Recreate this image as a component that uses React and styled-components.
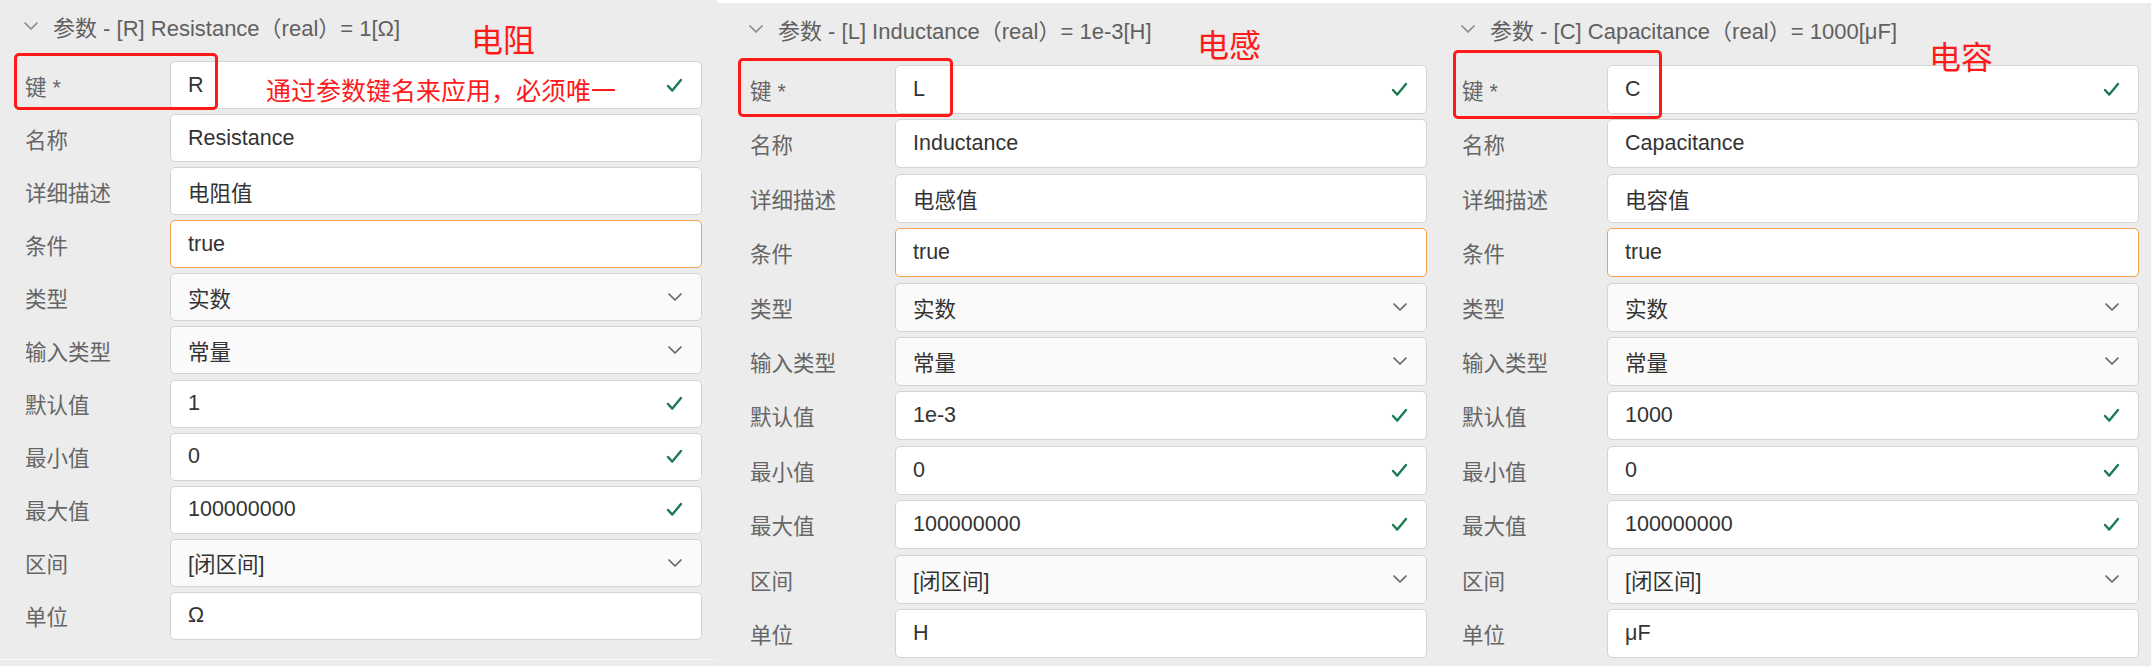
import React from "react";
import styled, { createGlobalStyle } from "styled-components";

const GlobalStyle = createGlobalStyle`
  html, body {
    margin: 0;
    padding: 0;
    background: #ececec;
  }
  body {
    font-family: "Liberation Sans", "Noto Sans CJK SC", sans-serif;
  }
`;

const panels = [
  {
    title: "参数 - [R] Resistance（real）= 1[Ω]",
    key: "R",
    name: "Resistance",
    desc: "电阻值",
    def: "1",
    unit: "Ω",
    note: "电阻",
    hint: "通过参数键名来应用，必须唯一",
    left: 25,
    strip: false,
    rowH: 48,
    gap: 5.1,
    offset: 11,
    box: { left: 14, top: 53, width: 204, height: 57 },
    notePos: { left: 471, top: 22 },
  },
  {
    title: "参数 - [L] Inductance（real）= 1e-3[H]",
    key: "L",
    name: "Inductance",
    desc: "电感值",
    def: "1e-3",
    unit: "H",
    note: "电感",
    left: 33,
    strip: true,
    rowH: 49,
    gap: 5.4,
    offset: 12,
    box: { left: 21, top: 55, width: 215, height: 59 },
    notePos: { left: 480, top: 24 },
  },
  {
    title: "参数 - [C] Capacitance（real）= 1000[μF]",
    key: "C",
    name: "Capacitance",
    desc: "电容值",
    def: "1000",
    unit: "μF",
    note: "电容",
    left: 22,
    strip: true,
    rowH: 49,
    gap: 5.4,
    offset: 12,
    box: { left: 13, top: 47, width: 209, height: 69 },
    notePos: { left: 489, top: 36 },
  },
];

const fieldsFor = (p) => [
  { label: "键 *", value: p.key, icon: "check" },
  { label: "名称", value: p.name },
  { label: "详细描述", value: p.desc },
  { label: "条件", value: "true", focus: true },
  { label: "类型", value: "实数", icon: "select" },
  { label: "输入类型", value: "常量", icon: "select" },
  { label: "默认值", value: p.def, icon: "check" },
  { label: "最小值", value: "0", icon: "check" },
  { label: "最大值", value: "100000000", icon: "check" },
  { label: "区间", value: "[闭区间]", icon: "select" },
  { label: "单位", value: p.unit },
];

const CheckIcon = () => (
  <svg width="17" height="15" viewBox="0 0 17 15">
    <path d="M2 8 L6.3 12.6 L15 2" fill="none" stroke="#1d7a52" strokeWidth="2.4" strokeLinecap="round" strokeLinejoin="round" />
  </svg>
);

const ChevronIcon = ({ color = "#666" }) => (
  <svg width="16" height="10" viewBox="0 0 16 10">
    <path d="M2 2 L8 8 L14 2" fill="none" stroke={color} strokeWidth="1.7" strokeLinecap="round" strokeLinejoin="round" />
  </svg>
);

const Field = ({ field }) => (
  <Input $focus={field.focus} $select={field.icon === "select"}>
    <Value>{field.value}</Value>
    {field.icon === "check" && <IconSlot><CheckIcon /></IconSlot>}
    {field.icon === "select" && <IconSlot><ChevronIcon /></IconSlot>}
  </Input>
);

const Panel = ({ p }) => (
  <Column $left={p.left} $strip={p.strip} $line={!p.strip}>
    <Header>
      <ChevronIcon color="#8a8a8a" />
      <Title>{p.title}</Title>
    </Header>
    <Form $gap={p.gap} $offset={p.offset}>
      {fieldsFor(p).map((f) => (
        <Row key={f.label} $h={p.rowH}>
          <Label>{f.label}</Label>
          <Field field={f} />
        </Row>
      ))}
    </Form>
    <RedBox style={p.box} />
    <Note style={p.notePos}>{p.note}</Note>
    {p.hint && <Hint>{p.hint}</Hint>}
  </Column>
);

export default function App() {
  return (
    <>
      <GlobalStyle />
      <Page>
        {panels.map((p) => (
          <Panel key={p.key} p={p} />
        ))}
      </Page>
    </>
  );
}

const Page = styled.div`
  display: grid;
  grid-template-columns: 717px 723px 711px;
  width: 2151px;
  height: 666px;
  overflow: hidden;
  background: #ececec;
`;

const Column = styled.section`
  position: relative;
  box-sizing: border-box;
  height: 666px;
  padding-left: ${(p) => p.$left}px;
  border-top: ${(p) => (p.$strip ? "3px solid #ffffff" : "0")};
  &::after {
    content: "";
    display: ${(p) => (p.$line ? "block" : "none")};
    position: absolute;
    left: 0;
    right: 0;
    top: 659px;
    height: 1px;
    background: #f7f7f7;
  }
`;

const Header = styled.div`
  display: flex;
  align-items: center;
  gap: 14px;
  height: 51px;
  margin-left: -2px;
`;

const Title = styled.span`
  font-size: 22px;
  color: #606060;
  white-space: nowrap;
`;

const Form = styled.div`
  display: flex;
  flex-direction: column;
  gap: ${(p) => p.$gap}px;
  margin-top: ${(p) => p.$offset - 1}px;
`;

const Row = styled.div`
  display: grid;
  grid-template-columns: 145px 532px;
  align-items: center;
  height: ${(p) => p.$h}px;
`;

const Label = styled.span`
  font-size: 21.5px;
  color: #666;
  white-space: nowrap;
`;

const Input = styled.div`
  box-sizing: border-box;
  height: 100%;
  display: flex;
  align-items: center;
  justify-content: space-between;
  padding: 0 18px 0 17px;
  background: ${(p) => (p.$select ? "#fafafa" : "#ffffff")};
  border: 1.5px solid ${(p) => (p.$focus ? "#f0a24a" : "#d3d3d3")};
  border-radius: 5px;
`;

const Value = styled.span`
  font-size: 21.5px;
  color: #333;
  white-space: nowrap;
`;

const IconSlot = styled.span`
  display: flex;
  align-items: center;
`;

const RedBox = styled.div`
  position: absolute;
  box-sizing: border-box;
  border: 3.5px solid #ff1a1a;
  border-radius: 5px;
  pointer-events: none;
`;

const Note = styled.span`
  position: absolute;
  font-family: "Noto Sans CJK SC", sans-serif;
  font-size: 32px;
  line-height: 1;
  color: #ff1a1a;
  white-space: nowrap;
`;

const Hint = styled.span`
  position: absolute;
  left: 266px;
  top: 77px;
  font-family: "Noto Sans CJK SC", sans-serif;
  font-size: 25px;
  line-height: 1;
  color: #ff1a1a;
  white-space: nowrap;
`;
